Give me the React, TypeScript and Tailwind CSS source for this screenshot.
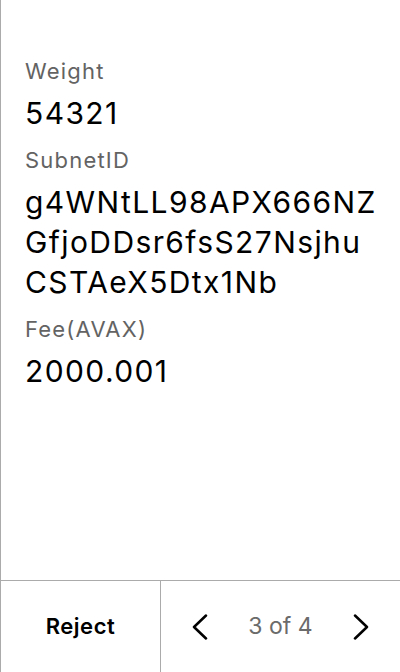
const fields = [
  { label: "Weight", lines: ["54321"] },
  { label: "SubnetID", lines: ["g4WNtLL98APX666NZ", "GfjoDDsr6fsS27Nsjhu", "CSTAeX5Dtx1Nb"] },
  { label: "Fee(AVAX)", lines: ["2000.001"] },
];

function Chevron({ dir }: { dir: "left" | "right" }) {
  return (
    <svg width="16" height="26" viewBox="0 0 16 26" fill="none" stroke="black" strokeWidth="2.5" strokeLinecap="round" strokeLinejoin="round">
      {dir === "left" ? <polyline points="14,1.5 2,13 14,24.5" /> : <polyline points="2,1.5 14,13 2,24.5" />}
    </svg>
  );
}

export default function App() {
  return (
    <div
      className="h-[672px] w-[400px] flex flex-col bg-white border-l border-[#ababab]"
      style={{ fontFamily: "Inter, 'Noto Sans', sans-serif" }}
    >
      <main className="flex-1 px-6 pt-[56px]">
        {fields.map((f) => (
          <div key={f.label} className="mb-3">
            <div className="text-[22px] leading-[30px] tracking-[1.2px] text-[#636363]">{f.label}</div>
            <div className="mt-[7px] text-[30px] leading-[40px] tracking-[1.4px] text-black">
              {f.lines.map((l) => (
                <div key={l}>{l}</div>
              ))}
            </div>
          </div>
        ))}
      </main>
      <footer className="h-[92px] flex border-t border-[#ababab]">
        <button className="w-[160px] flex items-center justify-center border-r border-[#ababab] text-[22px] font-semibold tracking-[0.5px] text-black">
          Reject
        </button>
        <div className="flex-1 flex items-center justify-between px-[31px]">
          <Chevron dir="left" />
          <span className="text-[23px] text-[#6b6b6b]">3 of 4</span>
          <Chevron dir="right" />
        </div>
      </footer>
    </div>
  );
}
